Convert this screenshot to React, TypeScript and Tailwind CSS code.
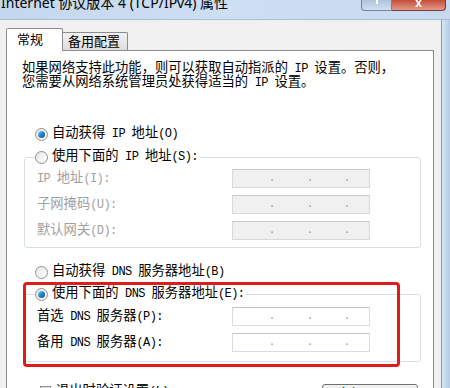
import React from 'react';

const CJK = '"Liberation Mono", "Noto Sans CJK SC", monospace';

// SimSun-style text: latin runs narrower than the CJK glyphs
function T({ text }: { text: string }) {
  const parts = text.split(/([\x20-\x7e]+)/).filter(Boolean);
  return (
    <>
      {parts.map((p, i) =>
        /^[\x20-\x7e]+$/.test(p) ? (
          <span key={i} className="text-[12px] tracking-[-0.6px] whitespace-pre">
            {p}
          </span>
        ) : (
          <span key={i}>{p}</span>
        ),
      )}
    </>
  );
}

function Radio({ checked }: { checked?: boolean }) {
  return (
    <span className="w-[13px] h-[13px] rounded-full border border-[#8e8f8f] bg-gradient-to-br from-[#e6e6e6] to-[#ffffff] flex items-center justify-center shrink-0">
      {checked && (
        <span className="w-[7px] h-[7px] rounded-full bg-gradient-to-br from-[#8ad1f5] via-[#2a83c6] to-[#10509a]" />
      )}
    </span>
  );
}

function IpField({ disabled }: { disabled?: boolean }) {
  return (
    <div
      className={`w-[138px] h-[19px] border flex items-end pb-[3px] ${
        disabled ? 'bg-[#f0f0f0] border-[#d9d9d9] border-t-[#c8c8c8]' : 'bg-white border-[#dcdcdc] border-t-[#c4c4c4]'
      }`}
    >
      <div className="flex w-full text-[10px] leading-[10px] text-[#8c8c8c]">
        <span className="ml-[36px]">.</span>
        <span className="ml-[32px]">.</span>
        <span className="ml-[31px]">.</span>
      </div>
    </div>
  );
}

function Row({ label, disabled }: { label: string; disabled?: boolean }) {
  return (
    <div className="grid grid-cols-[195px_138px] items-center h-[19px] pl-[12px]">
      <span className={disabled ? 'text-[#a0a0a0]' : 'text-black'}>
        <T text={label} />
      </span>
      <IpField disabled={disabled} />
    </div>
  );
}

export default function App() {
  return (
    <div
      className="w-[450px] h-[388px] overflow-hidden flex flex-col bg-[#f0f0f0] text-[13.3px] leading-[14px] text-black"
      style={{ fontFamily: CJK }}
    >
      {/* title bar */}
      <div className="h-[20px] shrink-0 flex items-start bg-gradient-to-r from-[#c3d7ee] via-[#cddff2] to-[#c6d9ee] border-b border-[#a9bdd4]">
        <span
          className="text-[14px] leading-[14px] -mt-[4px] ml-[1px] text-black whitespace-nowrap"
          style={{ fontFamily: '"Noto Sans", "Noto Sans CJK SC", sans-serif' }}
        >
          Internet 协议版本 4 (TCP/IPv4) 属性
        </span>
        <div className="ml-auto mr-[4px] flex h-[11px]">
          <div className="w-[31px] h-full border border-t-0 border-[#6f84a0] rounded-bl-[4px] bg-gradient-to-b from-[#aec4de] to-[#d2e0ef] flex justify-center">
            <span className="w-[2px] h-[4px] bg-white" />
          </div>
          <div className="w-[54px] h-full border border-t-0 border-l-0 border-[#7d3a30] rounded-br-[4px] bg-gradient-to-b from-[#c24a36] to-[#e29a8a] flex justify-center">
            <span className="text-white text-[12px] leading-[6px] font-bold" style={{ fontFamily: '"Liberation Sans", sans-serif' }}>
              x
            </span>
          </div>
        </div>
      </div>

      <div className="flex flex-1 min-h-0">
        {/* client area */}
        <div className="flex-1 pl-[6px] pr-[7px] pt-[8px] flex flex-col">
          {/* tabs */}
          <div className="flex items-end h-[23px] text-[13px]">
            <div className="w-[57px] h-[23px] bg-white border border-b-0 border-[#898c95] rounded-t-[2px] -mb-[1px] relative z-10 pl-[10px] pt-[5px]">
              常规
            </div>
            <div className="w-[65px] h-[18px] border border-l-0 border-b-0 border-[#898c95] rounded-tr-[2px] bg-gradient-to-b from-[#f2f2f2] to-[#dedede] pl-[5px] pt-[3px]">
              备用配置
            </div>
          </div>

          {/* panel */}
          <div className="flex-1 bg-white border border-[#898c95] relative flex flex-col">
            <p className="mt-[11px] pl-[15px] whitespace-nowrap">
              <T text="如果网络支持此功能，则可以获取自动指派的 IP 设置。否则，" />
              <br />
              <T text="您需要从网络系统管理员处获得适当的 IP 设置。" />
            </p>

            <div className="mt-[36px] ml-[28px] h-[16px] flex items-center gap-[4px]">
              <Radio checked />
              <span>
                <T text="自动获得 IP 地址(O)" />
              </span>
            </div>

            <div className="mt-[15px] ml-[17px] w-[397px] border border-[#d5dfe5] rounded-[3px] pb-[7px] flex flex-col">
              <div className="-mt-[9px] ml-[10px] h-[16px] w-fit pr-[2px] bg-white flex items-center gap-[4px]">
                <Radio />
                <span>
                  <T text="使用下面的 IP 地址(S):" />
                </span>
              </div>
              <div className="mt-[4px] flex flex-col gap-[7px]">
                <Row label="IP 地址(I):" disabled />
                <Row label="子网掩码(U):" disabled />
                <Row label="默认网关(D):" disabled />
              </div>
            </div>

            <div className="mt-[16px] ml-[28px] h-[16px] flex items-center gap-[4px]">
              <Radio />
              <span>
                <T text="自动获得 DNS 服务器地址(B)" />
              </span>
            </div>

            <div className="mt-[14px] ml-[17px] w-[397px] border border-[#d5dfe5] rounded-[3px] pb-[9px] flex flex-col">
              <div className="-mt-[9px] ml-[10px] h-[16px] w-fit pr-[2px] bg-white flex items-center gap-[4px]">
                <Radio checked />
                <span>
                  <T text="使用下面的 DNS 服务器地址(E):" />
                </span>
              </div>
              <div className="mt-[5px] flex flex-col gap-[7px]">
                <Row label="首选 DNS 服务器(P):" />
                <Row label="备用 DNS 服务器(A):" />
              </div>
            </div>

            <div className="mt-[23px] flex items-start">
              <div className="ml-[33px] flex items-start gap-[5px]">
                <span className="mt-[1px] w-[11px] h-[11px] border border-[#8e8f8f] bg-gradient-to-br from-[#dcdcdc] to-white" />
                <span className="leading-[14px]">
                  <T text="退出时验证设置(L)" />
                </span>
              </div>
              <div className="ml-auto mr-[15px] -mt-[1px] w-[96px] h-[23px] border border-[#707070] rounded-[3px] bg-gradient-to-b from-[#f2f2f2] to-[#dddddd] flex justify-center pt-[4px]">
                <T text="高级(V)..." />
              </div>
            </div>

            {/* red highlight annotation */}
            <div className="absolute left-[16px] top-[231px] w-[377px] h-[85px] border-[3px] border-[#e21a1a] rounded-[4px] pointer-events-none" />
          </div>
        </div>

        {/* right window frame */}
        <div className="w-[9px] border-l border-[#8a99ab] bg-gradient-to-r from-[#dbe7f5] via-[#c3d7ee] to-[#b5cce6]" />
      </div>
    </div>
  );
}
